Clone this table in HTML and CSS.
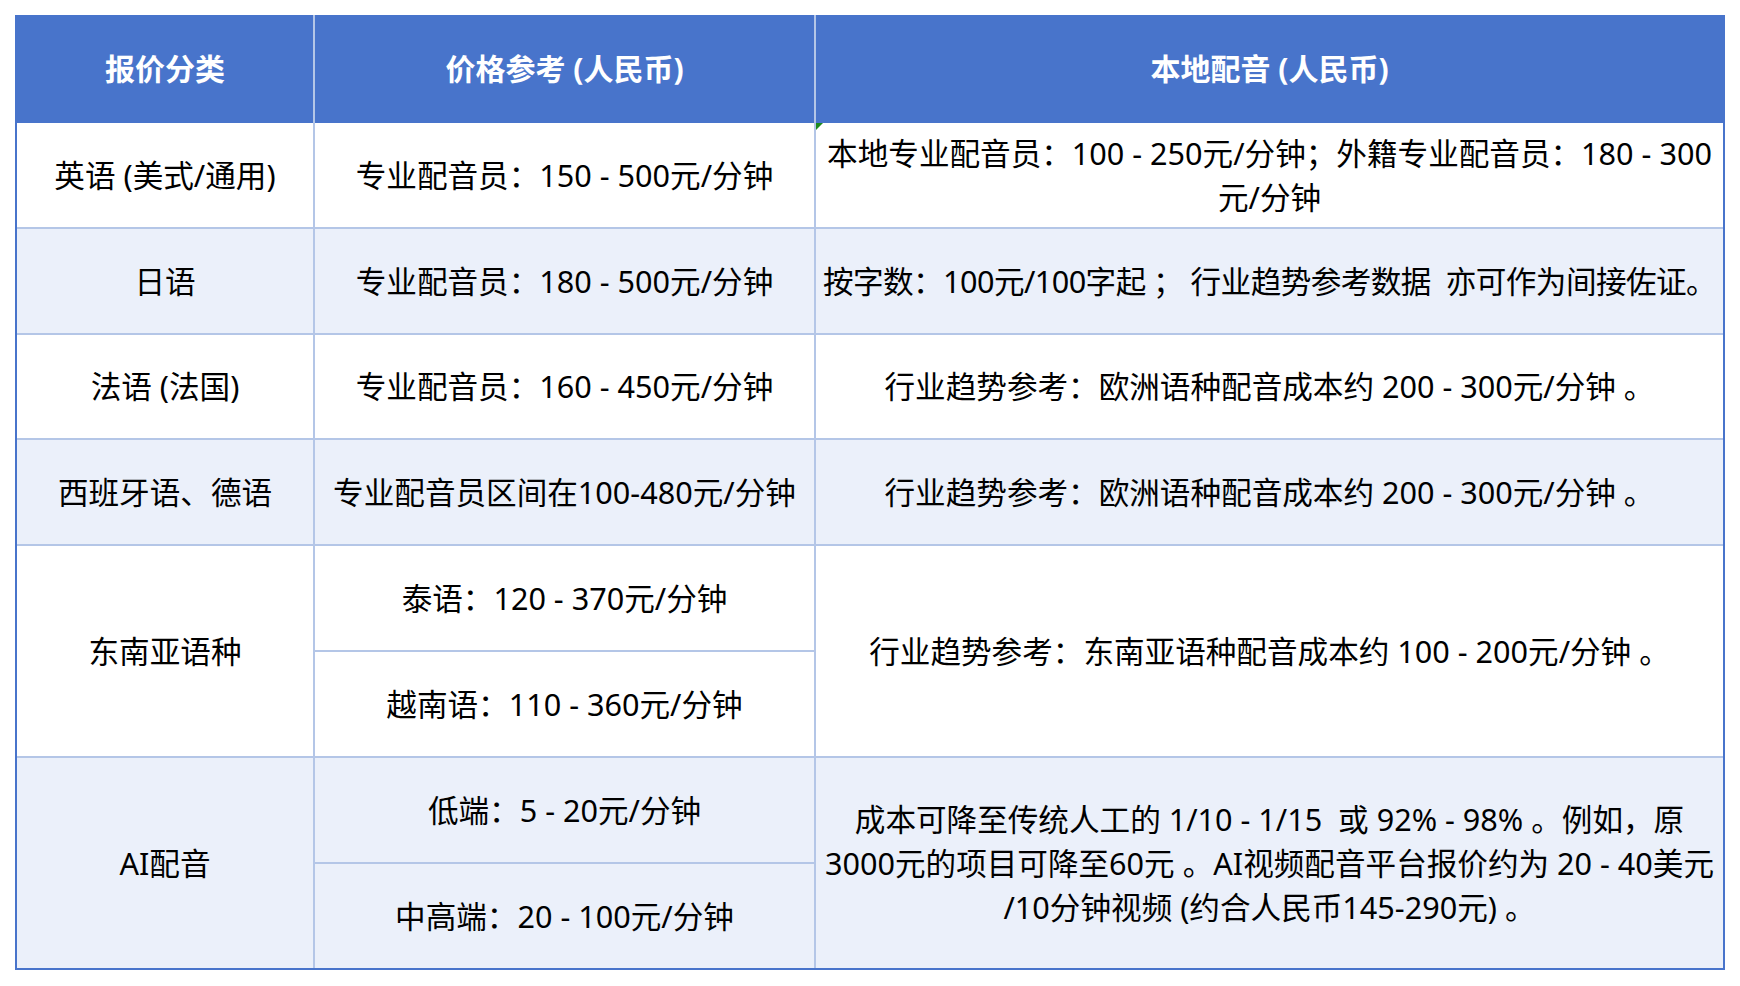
FILE: index.html
```html
<!DOCTYPE html>
<html lang="zh-CN">
<head>
<meta charset="utf-8">
<title>配音报价</title>
<link rel="stylesheet" href="styles.css">
</head>
<body>
<div class="sheet">
  <div class="cell head">报价分类</div>
  <div class="cell head">价格参考 (人民币)</div>
  <div class="cell head last">本地配音 (人民币)</div>

  <div class="cell">英语 (美式/通用)</div>
  <div class="cell">专业配音员：150 - 500元/分钟</div>
  <div class="cell last mark"><span class="lines">本地专业配音员：100 - 250元/分钟；外籍专业配音员：180 - 300<br>元/分钟</span></div>

  <div class="cell alt">日语</div>
  <div class="cell alt">专业配音员：180 - 500元/分钟</div>
  <div class="cell alt last tight">按字数：100元/100字起 ；&nbsp;行业趋势参考数据 &nbsp;亦可作为间接佐证。</div>

  <div class="cell">法语 (法国)</div>
  <div class="cell">专业配音员：160 - 450元/分钟</div>
  <div class="cell last">行业趋势参考：欧洲语种配音成本约 200 - 300元/分钟 。</div>

  <div class="cell alt">西班牙语、德语</div>
  <div class="cell alt">专业配音员区间在100-480元/分钟</div>
  <div class="cell alt last">行业趋势参考：欧洲语种配音成本约 200 - 300元/分钟 。</div>

  <div class="cell span2">东南亚语种</div>
  <div class="cell">泰语：120 - 370元/分钟</div>
  <div class="cell last span2">行业趋势参考：东南亚语种配音成本约 100 - 200元/分钟 。</div>
  <div class="cell">越南语：110 - 360元/分钟</div>

  <div class="cell alt span2 bottom">AI配音</div>
  <div class="cell alt">低端：5 - 20元/分钟</div>
  <div class="cell alt last span2 bottom"><span class="lines">成本可降至传统人工的 1/10 - 1/15 &nbsp;或 92% - 98% 。例如，原<br>3000元的项目可降至60元 。AI视频配音平台报价约为 20 - 40美元<br>/10分钟视频 (约合人民币145-290元) 。</span></div>
  <div class="cell alt bottom">中高端：20 - 100元/分钟</div>
</div>
</body>
</html>
```

FILE: styles.css
```css
html, body {
  margin: 0;
  padding: 0;
  background: #ffffff;
}

body {
  padding: 15px;
  font-family: "Noto Sans", "Noto Sans CJK SC", sans-serif;
  font-size: 30.6px;
  color: #000000;
}

.sheet {
  width: 1710px;
  box-sizing: border-box;
  display: grid;
  grid-template-columns: 298px 501px 907px;
  grid-template-rows: 108px repeat(7, 105.8px) 104px;
  border-left: 2px solid #4874cb;
  border-right: 2px solid #4874cb;
  border-bottom: 2.6px solid #4874cb;
  background: #ffffff;
}

.cell {
  box-sizing: border-box;
  display: flex;
  align-items: center;
  justify-content: center;
  text-align: center;
  line-height: 44px;
  border-right: 2px solid #b4c6e7;
  border-bottom: 2px solid #b4c6e7;
  background: #ffffff;
  white-space: nowrap;
  position: relative;
}

.cell.last {
  border-right: none;
}

.cell.bottom {
  border-bottom: none;
}

.cell.alt {
  background: #ebf0fa;
}

.cell.tight {
  letter-spacing: -0.55px;
}

.cell.head {
  background: #4874cb;
  color: #ffffff;
  font-weight: bold;
  font-size: 30px;
  border-bottom: none;
}

.cell.span2 {
  grid-row: span 2;
}

.lines {
  display: block;
}

.mark::before {
  content: "";
  position: absolute;
  left: 0;
  top: 0;
  width: 0;
  height: 0;
  border-top: 7px solid #1e8a1e;
  border-right: 7px solid transparent;
}
```
